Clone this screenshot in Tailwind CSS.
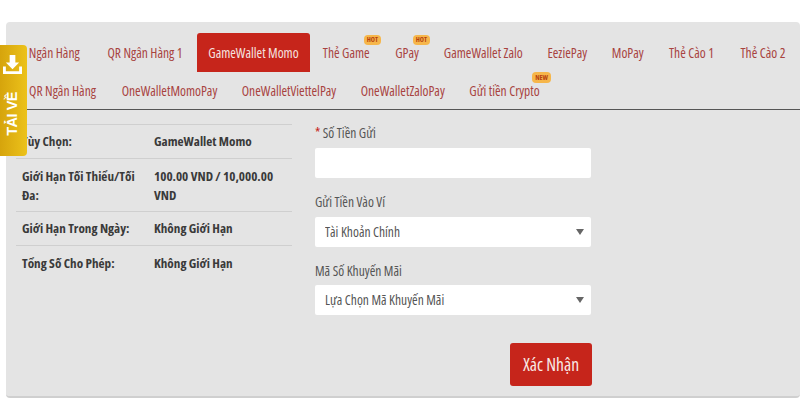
<!DOCTYPE html>
<html lang="vi">
<head>
	<meta charset="UTF-8">
	<title>Gửi Tiền</title>
	<script src="https://cdn.jsdelivr.net/npm/@tailwindcss/browser@4"></script>
</head>
<body class="bg-white font-['Open_Sans',sans-serif] text-[13.5px] [font-stretch:75%]">
	<div class="relative h-[400px] w-[800px] overflow-hidden pt-[22px] pl-[6px]">
		<!-- side badge -->
		<div class="absolute left-0 top-[45px] z-10 flex h-[111px] w-[27px] flex-col items-center rounded-r-[4px] bg-gradient-to-r from-[#d6a40c] to-[#ecc21a] pt-[10px] pr-[3px]">
			<svg class="h-[19px] w-[19px]" viewBox="0 0 20 20" fill="#fff">
				<path d="M7 0h6v8h4l-7 7-7-7h4z"/>
				<path d="M0 12h3v5h14v-5h3v8H0z"/>
			</svg>
			<span class="mt-[18px] rotate-180 font-['Liberation_Sans',sans-serif] text-[14.5px] font-bold leading-none tracking-[-0.5px] whitespace-nowrap text-white [writing-mode:vertical-rl]">TẢI VỀ</span>
		</div>

		<div class="h-[376px] rounded-[4px] border-b-2 border-[#cfcfcf] bg-[#e4e4e4] pt-[11px]">
			<!-- tabs -->
			<div class="flex h-[77px] flex-wrap content-start border-b border-[#555] pl-[9.5px] text-[#a8433f]">
				<a class="flex h-[39px] w-[77.5px] items-center justify-center pt-[2px]">Ngân Hàng</a>
				<a class="flex h-[39px] w-[104px] items-center justify-center pt-[2px]">QR Ngân Hàng 1</a>
				<a class="flex h-[39px] w-[113px] items-center justify-center rounded-t-[3px] bg-[#c6251b] pt-[2px] text-[#f5e4e0]">GameWallet Momo</a>
				<a class="relative flex h-[39px] w-[72.5px] items-center justify-center pt-[2px]">Thẻ Game
					<span class="absolute right-[1.5px] top-[2px] rounded-[4px] bg-[#f6b64a] px-[3px] text-[7px] leading-[10px] font-bold text-[#b5400f]">HOT</span>
				</a>
				<a class="relative flex h-[39px] w-[49px] items-center justify-center pt-[2px]">GPay
					<span class="absolute right-[1.5px] top-[2px] rounded-[4px] bg-[#f6b64a] px-[3px] text-[7px] leading-[10px] font-bold text-[#b5400f]">HOT</span>
				</a>
				<a class="flex h-[39px] w-[103.5px] items-center justify-center pt-[2px]">GameWallet Zalo</a>
				<a class="flex h-[39px] w-[64.5px] items-center justify-center pt-[2px]">EeziePay</a>
				<a class="flex h-[39px] w-[56.5px] items-center justify-center pt-[2px]">MoPay</a>
				<a class="flex h-[39px] w-[71px] items-center justify-center pt-[2px]">Thẻ Cào 1</a>
				<a class="flex h-[39px] w-[72px] items-center justify-center pt-[2px]">Thẻ Cào 2</a>
				<a class="flex h-[37px] w-[94px] items-center justify-center pt-[2px]">QR Ngân Hàng</a>
				<a class="flex h-[37px] w-[120px] items-center justify-center pt-[2px]">OneWalletMomoPay</a>
				<a class="flex h-[37px] w-[119px] items-center justify-center pt-[2px]">OneWalletViettelPay</a>
				<a class="flex h-[37px] w-[108.5px] items-center justify-center pt-[2px]">OneWalletZaloPay</a>
				<a class="relative flex h-[37px] w-[95px] items-center justify-center pt-[2px]">Gửi tiền Crypto
					<span class="absolute right-[1px] top-0 rounded-[4px] bg-[#f6b64a] px-[3px] text-[7px] leading-[11px] font-bold text-[#b5400f]">NEW</span>
				</a>
			</div>

			<div class="flex items-start pl-[10px] pt-[14px]">
				<!-- limits table -->
				<div class="w-[276px] border-t border-[#cfcfcf] text-[13.2px] font-bold text-[#3a3a3a]">
					<div class="flex h-[34px] items-center border-b border-[#cfcfcf] pl-[6px] pt-[1px]">
						<div class="w-[132px] shrink-0">Tùy Chọn:</div>
						<div>GameWallet Momo</div>
					</div>
					<div class="flex h-[53px] items-center border-b border-[#cfcfcf] pl-[6px] pt-[1px] leading-[19px]">
						<div class="w-[132px] shrink-0 pr-[4px]">Giới Hạn Tối Thiểu/Tối Đa:</div>
						<div class="pr-[10px]">100.00 VND / 10,000.00 VND</div>
					</div>
					<div class="flex h-[34px] items-center border-b border-[#cfcfcf] pl-[6px] pt-[1px]">
						<div class="w-[132px] shrink-0">Giới Hạn Trong Ngày:</div>
						<div>Không Giới Hạn</div>
					</div>
					<div class="flex h-[34px] items-center pl-[6px] pt-[2px]">
						<div class="w-[132px] shrink-0">Tổng Số Cho Phép:</div>
						<div>Không Giới Hạn</div>
					</div>
				</div>

				<!-- form -->
				<form class="ml-[23px] flex w-[277px] flex-col text-[#555]">
					<label class="mb-[6px] leading-[18px]"><span class="text-[#c6251b]">*</span> Số Tiền Gửi</label>
					<input type="text" class="h-[30px] w-[276px] rounded-[2px] bg-white">
					<label class="mb-[6px] mt-[15px] leading-[18px]">Gửi Tiền Vào Ví</label>
					<div class="relative h-[30px] w-[276px]">
						<select class="h-full w-full appearance-none rounded-[2px] bg-white px-[10px] text-[#555]">
							<option>Tài Khoản Chính</option>
						</select>
						<span class="absolute right-[7px] top-[12px] h-0 w-0 border-x-[4px] border-t-[6px] border-x-transparent border-t-[#666]"></span>
					</div>
					<label class="mb-[5px] mt-[15px] leading-[18px]">Mã Số Khuyến Mãi</label>
					<div class="relative h-[30px] w-[276px]">
						<select class="h-full w-full appearance-none rounded-[2px] bg-white px-[10px] text-[#555]">
							<option>Lựa Chọn Mã Khuyến Mãi</option>
						</select>
						<span class="absolute right-[7px] top-[12px] h-0 w-0 border-x-[4px] border-t-[6px] border-x-transparent border-t-[#666]"></span>
					</div>
					<button type="button" class="mt-[28px] ml-auto h-[43px] w-[82px] rounded-[3px] bg-[#c6251b] text-[17.5px] text-[#f8ebe6]">Xác Nhận</button>
				</form>
			</div>
		</div>
	</div>
</body>
</html>
